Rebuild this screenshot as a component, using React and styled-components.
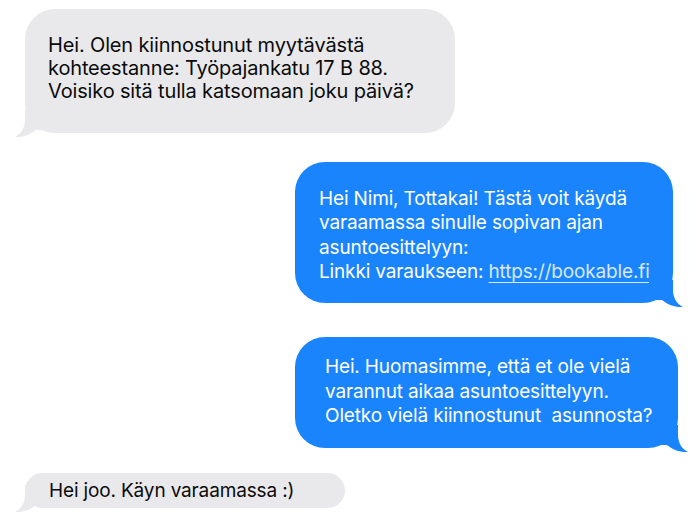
import React from 'react'
import styled, { createGlobalStyle } from 'styled-components'

const GlobalStyle = createGlobalStyle`
  html, body {
    margin: 0;
    padding: 0;
    background: #ffffff;
  }

  body {
    width: 700px;
    height: 515px;
    overflow: hidden;
    font-family: Inter, "Noto Sans", "Liberation Sans", sans-serif;
  }
`;

const Thread = styled.main`
  display: flex;
  flex-direction: column;
  padding-top: 9px;
`;

const Bubble = styled.div`
  position: relative;
  box-sizing: border-box;
  width: ${p => p.$width}px;
  min-height: ${p => p.$height}px;
  margin-top: ${p => p.$gap}px;
  align-self: ${p => (p.$sent ? 'flex-end' : 'flex-start')};
  margin-left: ${p => (p.$sent ? 0 : 25)}px;
  margin-right: ${p => (p.$sent ? p.$right : 0)}px;
  padding: ${p => p.$pad};
  border-radius: ${p => p.$radius || 30}px;
  background: ${p => (p.$sent ? '#1a84fc' : '#e9e9eb')};
  color: ${p => (p.$sent ? '#ffffff' : '#0b0b0b')};
  font-size: ${p => p.$size}px;
  line-height: ${p => p.$line}px;
  letter-spacing: -0.15px;
  white-space: pre;

  svg {
    position: absolute;
    bottom: -5px;
    ${p => (p.$sent ? 'right: -12px; transform: scaleX(-1);' : 'left: -12px;')}
  }
`;

const Link = styled.span`
  color: #d8e8ff;
  text-decoration: underline;
  text-decoration-thickness: 1px;
  text-underline-offset: 4px;
`;

const Tail = ({ color }) => (
  <svg width="36" height="28" viewBox="0 0 36 28">
    <path
      d="M12 0 L12 10 C12 18 8 24 2 27 C10 27.5 17 25 23 20 L36 20 L36 0 Z"
      fill={color}
    />
  </svg>
);

const Message = ({ sent, lines, ...rest }) => (
  <Bubble $sent={sent} {...rest}>
    {lines.map((line, i) => (
      <React.Fragment key={i}>
        {i > 0 && <br />}
        {line}
      </React.Fragment>
    ))}
    <Tail color={sent ? '#1a84fc' : '#e9e9eb'} />
  </Bubble>
);

const App = () => {
  return (
    <>
      <GlobalStyle />
      <Thread>
        <Message
          $width={430}
          $height={124}
          $gap={0}
          $pad="25px 20px 29px 23px"
          $size={20}
          $line={23}
          lines={[
            'Hei. Olen kiinnostunut myytävästä',
            'kohteestanne: Työpajankatu 17 B 88.',
            'Voisiko sitä tulla katsomaan joku päivä?',
          ]}
        />
        <Message
          sent
          $width={378}
          $height={141}
          $gap={29}
          $right={27}
          $pad="25px 20px 18px 24px"
          $size={19}
          $line={24.3}
          lines={[
            'Hei Nimi, Tottakai! Tästä voit käydä',
            'varaamassa sinulle sopivan ajan',
            'asuntoesittelyyn:',
            <>Linkki varaukseen: <Link>https://bookable.fi</Link></>,
          ]}
        />
        <Message
          sent
          $width={383}
          $height={111}
          $gap={34}
          $right={22}
          $pad="18px 20px 18px 30px"
          $size={19}
          $line={24.5}
          lines={[
            'Hei. Huomasimme, että et ole vielä',
            'varannut aikaa asuntoesittelyyn.',
            'Oletko vielä kiinnostunut  asunnosta?',
          ]}
        />
        <Message
          $width={320}
          $height={35}
          $gap={25}
          $radius={18}
          $pad="5px 20px 5px 24px"
          $size={19}
          $line={25}
          lines={['Hei joo. Käyn varaamassa :)']}
        />
      </Thread>
    </>
  )
}

export default App
